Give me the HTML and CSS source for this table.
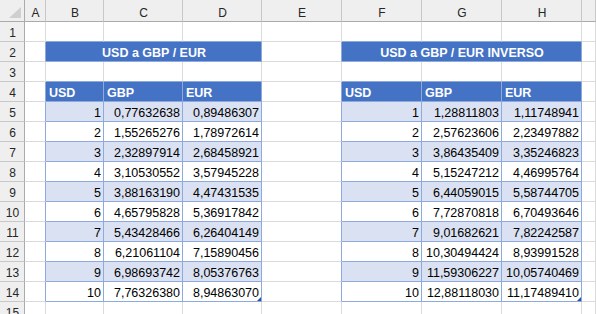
FILE: index.html
```html
<!DOCTYPE html>
<html lang="es">
	<head>
		<meta charset="utf-8">
		<title>USD a GBP / EUR</title>
		<link rel="stylesheet" href="styles.css">
	</head>
	<body>
		<div class="sheet">
			<div class="row head">
				<div class="c corner"></div>
				<div class="c ch">A</div><div class="c ch">B</div><div class="c ch">C</div><div class="c ch">D</div>
				<div class="c ch">E</div><div class="c ch">F</div><div class="c ch">G</div><div class="c ch">H</div><div class="c ch"></div>
			</div>
			<div class="row">
				<div class="c rh">1</div>
				<div class="c"></div><div class="c edge-b"></div><div class="c edge-b"></div><div class="c edge-b"></div>
				<div class="c"></div><div class="c edge-b"></div><div class="c edge-b"></div><div class="c edge-b"></div><div class="c"></div>
			</div>
			<div class="row">
				<div class="c rh">2</div>
				<div class="c edge-r"></div><div class="c title">USD a GBP / EUR</div>
				<div class="c edge-r"></div><div class="c title">USD a GBP / EUR INVERSO</div><div class="c"></div>
			</div>
			<div class="row">
				<div class="c rh">3</div>
				<div class="c"></div><div class="c edge-b"></div><div class="c edge-b"></div><div class="c edge-b"></div>
				<div class="c"></div><div class="c edge-b"></div><div class="c edge-b"></div><div class="c edge-b"></div><div class="c"></div>
			</div>
			<div class="row">
				<div class="c rh">4</div>
				<div class="c edge-r"></div><div class="c th">USD</div><div class="c th">GBP</div><div class="c th">EUR</div>
				<div class="c edge-r"></div><div class="c th">USD</div><div class="c th">GBP</div><div class="c th">EUR</div><div class="c"></div>
			</div>
			<div class="row">
				<div class="c rh">5</div>
				<div class="c edge-r"></div><div class="c td band">1</div><div class="c td band">0,77632638</div><div class="c td band">0,89486307</div>
				<div class="c edge-r"></div><div class="c td band">1</div><div class="c td band">1,28811803</div><div class="c td band">1,11748941</div><div class="c"></div>
			</div>
			<div class="row">
				<div class="c rh">6</div>
				<div class="c edge-r"></div><div class="c td">2</div><div class="c td">1,55265276</div><div class="c td">1,78972614</div>
				<div class="c edge-r"></div><div class="c td">2</div><div class="c td">2,57623606</div><div class="c td">2,23497882</div><div class="c"></div>
			</div>
			<div class="row">
				<div class="c rh">7</div>
				<div class="c edge-r"></div><div class="c td band">3</div><div class="c td band">2,32897914</div><div class="c td band">2,68458921</div>
				<div class="c edge-r"></div><div class="c td band">3</div><div class="c td band">3,86435409</div><div class="c td band">3,35246823</div><div class="c"></div>
			</div>
			<div class="row">
				<div class="c rh">8</div>
				<div class="c edge-r"></div><div class="c td">4</div><div class="c td">3,10530552</div><div class="c td">3,57945228</div>
				<div class="c edge-r"></div><div class="c td">4</div><div class="c td">5,15247212</div><div class="c td">4,46995764</div><div class="c"></div>
			</div>
			<div class="row">
				<div class="c rh">9</div>
				<div class="c edge-r"></div><div class="c td band">5</div><div class="c td band">3,88163190</div><div class="c td band">4,47431535</div>
				<div class="c edge-r"></div><div class="c td band">5</div><div class="c td band">6,44059015</div><div class="c td band">5,58744705</div><div class="c"></div>
			</div>
			<div class="row">
				<div class="c rh">10</div>
				<div class="c edge-r"></div><div class="c td">6</div><div class="c td">4,65795828</div><div class="c td">5,36917842</div>
				<div class="c edge-r"></div><div class="c td">6</div><div class="c td">7,72870818</div><div class="c td">6,70493646</div><div class="c"></div>
			</div>
			<div class="row">
				<div class="c rh">11</div>
				<div class="c edge-r"></div><div class="c td band">7</div><div class="c td band">5,43428466</div><div class="c td band">6,26404149</div>
				<div class="c edge-r"></div><div class="c td band">7</div><div class="c td band">9,01682621</div><div class="c td band">7,82242587</div><div class="c"></div>
			</div>
			<div class="row">
				<div class="c rh">12</div>
				<div class="c edge-r"></div><div class="c td">8</div><div class="c td">6,21061104</div><div class="c td">7,15890456</div>
				<div class="c edge-r"></div><div class="c td">8</div><div class="c td">10,30494424</div><div class="c td">8,93991528</div><div class="c"></div>
			</div>
			<div class="row">
				<div class="c rh">13</div>
				<div class="c edge-r"></div><div class="c td band">9</div><div class="c td band">6,98693742</div><div class="c td band">8,05376763</div>
				<div class="c edge-r"></div><div class="c td band">9</div><div class="c td band">11,59306227</div><div class="c td band">10,05740469</div><div class="c"></div>
			</div>
			<div class="row">
				<div class="c rh">14</div>
				<div class="c edge-r"></div><div class="c td">10</div><div class="c td">7,76326380</div><div class="c td last">8,94863070</div>
				<div class="c edge-r"></div><div class="c td">10</div><div class="c td">12,88118030</div><div class="c td last">11,17489410</div><div class="c"></div>
			</div>
			<div class="row">
				<div class="c rh">15</div>
				<div class="c"></div><div class="c"></div><div class="c"></div><div class="c"></div>
				<div class="c"></div><div class="c"></div><div class="c"></div><div class="c"></div><div class="c"></div>
			</div>
		</div>
	</body>
</html>
```

FILE: styles.css
```css
body {
	background: #fff;
	color: #000;
	font-family: "Liberation Sans", Arial, sans-serif;
	font-size: 12.5px;
	height: 314px;
	margin: 0;
	overflow: hidden;
}
.sheet {
	width: 596px;
}
.row {
	display: grid;
	grid-template-columns: 25px 21px 58px 79px 79px 80px 80px 80px 80px 1fr;
	height: 20px;
}
.row.head {
	height: 22px;
}
.c {
	border-bottom: 1px solid #dadada;
	border-right: 1px solid #dadada;
	box-sizing: border-box;
	line-height: 14px;
	overflow: hidden;
	padding: 4px 2px 0 3px;
	white-space: nowrap;
}
.ch,
.rh,
.corner {
	background-color: #efefef;
	color: #262626;
	font-size: 12px;
	text-align: center;
}
.ch {
	border-bottom-color: #ababab;
	border-right-color: #c8c8c8;
	padding-top: 6px;
}
.rh {
	border-bottom-color: #c8c8c8;
	border-right-color: #ababab;
}
.corner {
	align-items: flex-end;
	border-bottom-color: #ababab;
	border-right-color: #ababab;
	display: flex;
	justify-content: flex-end;
	padding: 0 3px 3px 0;
}
.corner::after {
	background-color: #cfcfcf;
	clip-path: polygon(100% 0, 100% 100%, 0 100%);
	content: '';
	height: 11px;
	width: 12px;
}

/* table pieces */
.edge-r {
	border-right-color: #8ea9db;
}
.edge-b {
	border-bottom-color: #8ea9db;
}
.title {
	background-color: #4472c4;
	border-bottom-color: #8ea9db;
	border-right-color: #8ea9db;
	color: #fff;
	font-weight: bold;
	grid-column: span 3;
	text-align: center;
}
.th {
	background-color: #4472c4;
	border-bottom-color: #8ea9db;
	border-right-color: #8ea9db;
	color: #fff;
	font-weight: bold;
}
.td {
	border-bottom-color: #8ea9db;
	border-right-color: #8ea9db;
	text-align: right;
}
.band {
	background-color: #d9e1f2;
}
.last {
	position: relative;
}
.last::after {
	background-color: #2f5597;
	bottom: 0;
	clip-path: polygon(100% 0, 100% 100%, 0 100%);
	content: '';
	height: 4px;
	position: absolute;
	right: 0;
	width: 4px;
}
```
